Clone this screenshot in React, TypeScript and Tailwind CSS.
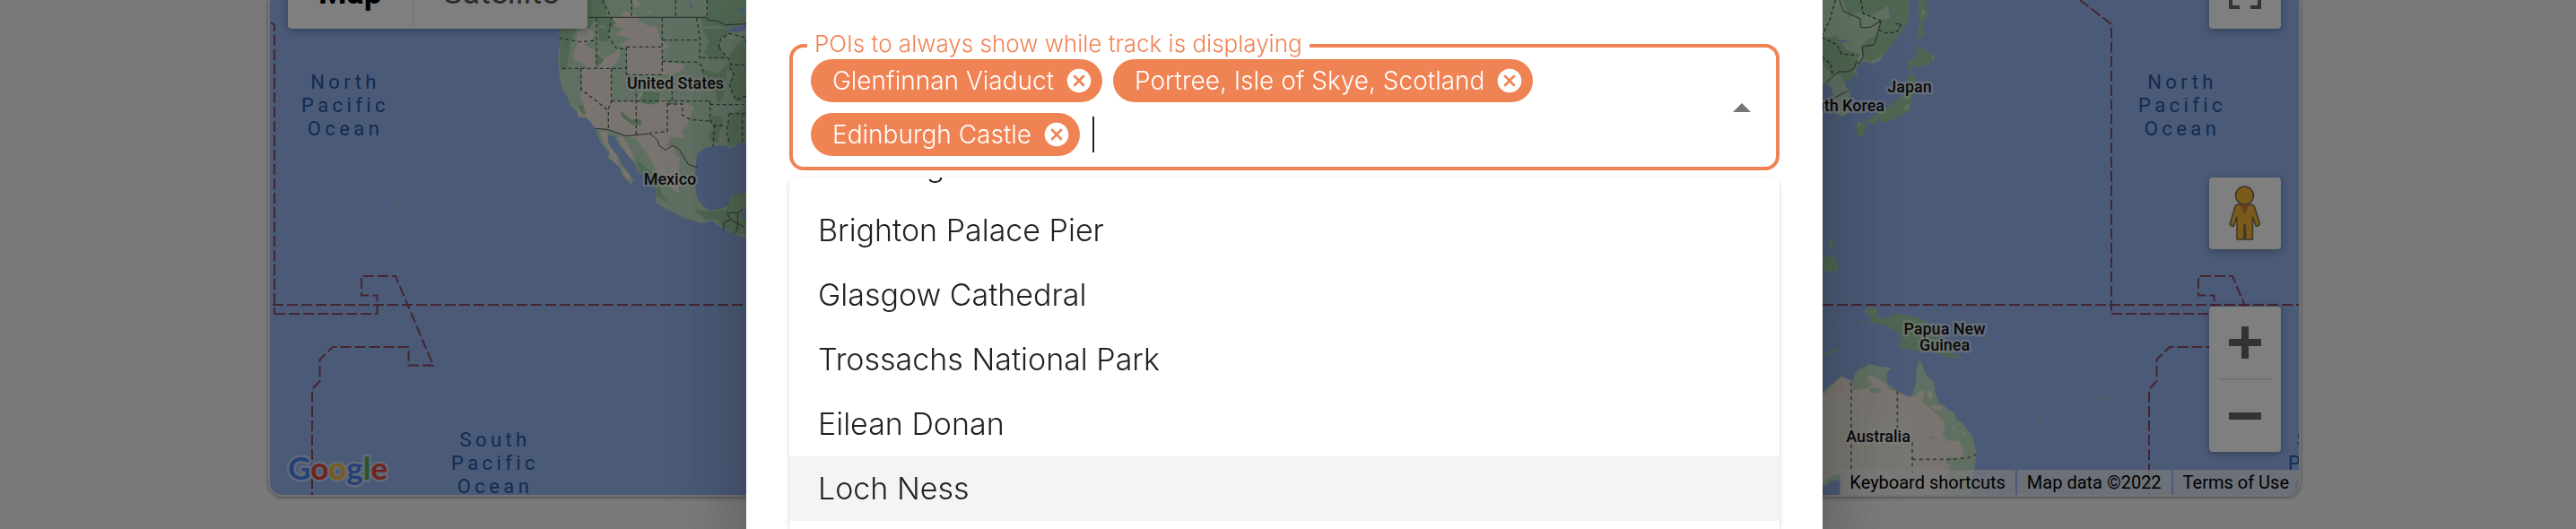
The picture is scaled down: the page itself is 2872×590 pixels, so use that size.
import React from 'react';

const CHIPS = ['Glenfinnan Viaduct', 'Portree, Isle of Skye, Scotland', 'Edinburgh Castle'];
const OPTIONS = [
  'Edinburgh Castle',
  'Brighton Palace Pier',
  'Glasgow Cathedral',
  'Trossachs National Park',
  'Eilean Donan',
  'Loch Ness',
];
const ACTIVE_OPTION = 'Loch Ness';

function OceanLabel({ x, y, first }: { x: number; y: number; first: string }) {
  return (
    <text textAnchor="middle" className="fill-[#28569f] text-[22px] tracking-[0.2em]">
      <tspan x={x} y={y}>{first}</tspan>
      <tspan x={x} y={y + 26}>Pacific</tspan>
      <tspan x={x} y={y + 52}>Ocean</tspan>
    </text>
  );
}

function CountryLabel({ x, y, lines, anchor = 'middle' }: { x: number; y: number; lines: string[]; anchor?: 'middle' | 'end' }) {
  return (
    <text
      textAnchor={anchor}
      stroke="#ffffff"
      strokeOpacity="0.5"
      strokeWidth="5"
      strokeLinejoin="round"
      paintOrder="stroke"
      className="fill-[#161616] text-[18px] font-medium"
    >
      {lines.map((line, i) => (
        <tspan key={line} x={x} y={y + i * 18}>{line}</tspan>
      ))}
    </text>
  );
}

function NorthAmerica() {
  return (
    <g transform="translate(600 0) scale(0.33333)">
      <path
        fill="#bfe0c4"
        d="M71 0V96L75 130 66 195 70 240 73 270 82 300 98 325 108 355 130 375 135 392 160 395 180 412 192 432 205 470 222 495 238 512 230 528 258 540 275 565 280 585 310 617 321 605 300 575 280 550 270 525 245 497 235 475 233 452 258 457 270 485 300 520 325 550 330 572 365 588 395 635 394 680 440 705 490 730 548 748 580 738 610 760 660 785 700 798V642L660 655 645 685 605 700 575 705 552 690 530 660 524 600 530 515 560 495 590 488 625 487 640 497 655 493 665 480 700 477V0Z"
      />
      <g fill="#f3e9df">
        <path d="M143 229H245L240 262 252 300 244 340H328L345 305 360 345 400 350 415 325 430 348 500 345 520 365 505 385 500 420 480 440 490 460 445 460 430 487 455 495 460 520 475 530 468 580 472 645 450 635 420 590 400 575 365 515 345 490 330 465 290 455 232 433 192 430 160 390 135 392 130 350 155 360 140 320 150 300Z" />
        <path d="M250 55 275 60 290 35 335 55 335 70 375 90 395 85 410 135 438 155 415 170 412 205 490 215 485 235 445 250H300L295 165 270 150 310 130 260 115 285 95 250 85Z" />
        <path d="M130 105 165 90 190 110 180 135 150 150 190 165 190 229H165L150 210 120 200 118 170 130 150Z" />
        <path d="M195 165 220 195 275 165 270 200 240 229H200Z" />
        <path d="M205 440 232 440 233 480 262 520 270 550 310 592 300 605 275 560 238 530 240 505 220 480Z" />
        <path d="M262 458 285 458 310 500 325 540 300 520Z" />
        <path d="M310 0H330L345 15 325 25ZM360 35 385 37 370 44Z" />
        <path d="M460 350 520 355 505 400 480 395Z" />
      </g>
      <g fill="#9fcea4">
        <path d="M100 0H225L230 55 260 75 235 110 235 140 205 140 195 60 170 96 125 96 110 140 95 229 80 235 70 225 75 130 71 96Z" />
        <path d="M565 0H700V75L640 95 600 85 550 90 545 60 570 55Z" />
        <path d="M550 95 625 95 640 110 610 130 605 160 635 195 580 200 555 175 570 140Z" />
        <path d="M640 180 700 110V350L660 335 640 285 650 240 635 220Z" />
        <path d="M545 230 600 245 635 215 620 330 600 345 590 290 560 270Z" />
        <path d="M590 385 620 395 612 425 600 480 575 475 570 450 588 430 570 400Z" />
        <path d="M650 380 700 350V478L665 480 640 495 630 465 640 440 632 410Z" />
        <path d="M645 655 700 642V790L650 780 610 755 600 735 560 735 520 700 575 708 630 700Z" />
        <path d="M325 530 360 560 400 590 415 650 440 680 400 660 380 600 340 575Z" />
        <path d="M275 370 310 400 345 400 345 420 310 415 280 390ZM335 340 355 305 405 310 405 340 370 350Z" />
        <path d="M130 350 150 350 160 385 145 380ZM195 175 220 200 200 225Z" />
      </g>
      <g fill="#d7ead7" opacity="0.7">
        <path d="M140 110 165 105 160 135ZM200 90 220 80 222 95ZM635 120 665 115 655 135 640 135ZM585 270 605 262 600 285ZM430 548 450 560 440 575 422 562Z" />
      </g>
      <path fill="#94b4ee" d="M622 112 650 92 700 80V100L660 108 640 105ZM672 28 688 30 685 45 673 42ZM500 0 518 25 512 28ZM683 700 700 695V742L686 738Z" />
      <g fill="none" stroke="#55605a" strokeWidth="4" strokeDasharray="12 9">
        <path d="M312 0V58M460 0V58M565 0V58M415 60V250M415 134H542M530 60 542 134 540 190 548 200M548 193H632M295 157H415M295 157V250M295 250H415M415 205 530 208 548 220 555 262M195 60V135L140 140 70 127M195 140V229M80 229H295M245 229V340L235 365V432M143 229V298L235 370M244 338H575M328 250V455M448 262V348M432 345V440L375 445M432 348H482V385L510 400 575 405M575 338V400L590 425 585 490M215 0 245 60 235 120 260 160 295 165M585 420H628M605 160 610 130 640 112 690 125 700 150M605 160 640 200 645 217H700M640 225 655 250 640 285 660 335 700 320M575 350H700M640 380 630 440 640 480M683 380V480M640 380H700" />
      </g>
      <path
        fill="none"
        stroke="#4c5550"
        strokeWidth="3"
        d="M170 58H565L570 68 600 70 625 83 700 80M190 430 232 433 295 455 375 447 400 470 405 488 426 502 450 487 472 500 502 550 532 560M620 770 622 745 645 735 632 715 650 710 668 712 685 700M668 712V748L690 760M645 735 668 748 665 770 655 782"
      />
    </g>
  );
}

function EastAsia() {
  return (
    <g transform="scale(0.33333) translate(6084 0)">
      <path
        fill="#bfe0c4"
        d="M0 0H302L300 65 270 115 240 155 215 185 200 205 175 212 150 205 122 232 130 250 85 275 90 290 105 310 100 340 108 370 75 392 58 380 48 350 45 300 30 285 0 280Z"
      />
      <g fill="#9fcea4">
        <path d="M80 0H302L300 65 270 115 215 185 180 210 150 200 140 160 165 130 205 110 200 70 240 60 230 20 180 50 130 40 100 60Z" />
        <path d="M12 130 60 120 90 165 130 180 130 225 110 235 130 250 85 275 75 250 40 250 12 210Z" />
        <path d="M332 0H358L368 50 345 70 355 115 330 130 335 60ZM330 150 385 185 388 200 345 225 310 222 298 240 295 205 322 195ZM302 250 322 250 325 290 310 330 305 370 260 395 215 412 200 395 185 420 160 405 200 375 240 350 290 310ZM120 415 155 405 155 440 140 462 128 450ZM415 160 432 152 430 163Z" />
      </g>
      <path fill="#c8dfca" d="M345 30 360 45 345 52ZM375 185 388 190 384 198ZM280 365 300 345 300 370ZM130 410 142 412 130 430ZM175 205 215 185 205 205 180 212Z" />
      <path fill="#94b4ee" d="M60 135 108 135 85 142 65 142ZM235 38 243 30 240 48ZM160 152 168 158 165 168Z" />
      <path
        fill="none"
        stroke="#4c5550"
        strokeWidth="3"
        d="M68 0 82 38 137 62 140 92 170 92 208 70 185 150 145 155 148 190 135 215 125 205 118 230 95 240 65 240 20 280M50 328 95 305"
      />
      <path
        fill="none"
        stroke="#4c5550"
        strokeWidth="4"
        strokeDasharray="12 8"
        d="M55 0 35 70 10 120M140 0 148 45 208 70M200 100 230 112 262 105 275 80 250 80M10 125 60 150 75 180 130 185M10 190 40 215 45 250"
      />
    </g>
  );
}

function Oceania() {
  return (
    <g transform="translate(2028 320) scale(0.33333)">
      <path
        fill="#9fcea4"
        d="M145 80 175 65 195 72 195 95 215 110 255 88 310 98 360 115 400 160 430 215 470 232 465 240 430 235 380 215 320 215 290 205 258 200 275 185 265 155 225 130 200 120 170 122 175 100ZM12 50 40 38 35 48ZM85 48 100 38 97 48ZM58 113 78 118 65 122ZM132 118 155 112 150 120ZM20 225 45 208 75 205 50 218 25 232ZM135 256 148 258 140 264ZM545 160 562 170 560 177Z"
      />
      <path
        fill="#bfe0c4"
        d="M0 360 12 350 75 298 115 315 118 295 130 280 170 258 195 265 243 270 225 290 230 325 262 347 290 365 312 362 325 320 325 280 335 248 345 255 355 290 385 320 388 350 400 385 455 425 460 445 480 455 515 500 527 560 520 610 505 696H75L72 645 40 650 0 680Z"
      />
      <path
        fill="#f3e9df"
        d="M0 380 45 330 75 300 115 320 110 345 160 340 180 325 160 300 175 295 225 325 235 345 262 350 300 368 325 365 340 345 352 352 345 385 360 395 390 422 418 450 420 480 412 495 430 515 470 515 485 555 470 572 430 570 425 590 440 595 430 640 410 696H75L90 625 50 630 12 655 0 660Z"
      />
      <path fill="#f3e9df" d="M360 350 375 345 380 375 368 372ZM375 395 410 400 412 415 385 410ZM445 470 455 465 450 490ZM475 480 490 490 485 498Z" />
      <path fill="#efece2" opacity="0.8" d="M0 400 60 350 130 380 200 440 310 410 330 500 340 620 300 696H90L100 610 0 650Z" />
      <path fill="#bfe0c4" d="M165 340 195 335 210 350 180 358ZM368 505 375 497 382 504 375 510Z" />
      <g fill="none" stroke="#77786f" strokeWidth="5" strokeDasharray="12 11">
        <path d="M108 320V630M262 348V480M312 520V640M312 577H440L500 572 527 560" />
      </g>
    </g>
  );
}

function TreatyLines() {
  return (
    <path d="M306 350H420.500V329.500H403V308H441L483 407.500H455.500V387H371L356.500 401V425L348 434V552" />
  );
}

function WorldMap() {
  return (
    <svg viewBox="301 0 2262 552" className="block w-full font-[Roboto,sans-serif]" aria-label="World map">
      <rect x="301" width="2262" height="552" fill="#94b4ee" />
      <NorthAmerica />
      <EastAsia />
      <Oceania />
      <g fill="#9fcea4">
        <path d="M443 223 448 228H443ZM2038 268H2043L2044 277 2041 280ZM2032 288 2044 285 2050 298 2049 302 2042 305 2032 300ZM2266 458 2276 468 2274 469ZM2341 441 2346 444 2341 446Z" />
      </g>
      <g fill="none" stroke="#8a4a60" strokeWidth="2" strokeDasharray="12 4">
        <path d="M304 340H2563" />
        <path d="M302 25 306 28V350" />
        <path d="M2319 0 2354 27V350" />
        <TreatyLines />
        <g transform="translate(2048 0)">
          <TreatyLines />
        </g>
      </g>
      <OceanLabel x={385} y={99} first="North" />
      <OceanLabel x={552} y={498} first="South" />
      <OceanLabel x={2433} y={99} first="North" />
      <OceanLabel x={2600} y={498} first="South" />
      <CountryLabel x={753} y={99} lines={['United States']} />
      <CountryLabel x={747} y={206} lines={['Mexico']} />
      <CountryLabel x={2129} y={103} lines={['Japan']} />
      <CountryLabel x={2101} y={124} lines={['South Korea']} anchor="end" />
      <CountryLabel x={2168} y={373} lines={['Papua New', 'Guinea']} />
      <CountryLabel x={2094} y={493} lines={['Australia']} />
      <text
        x="321"
        y="535"
        stroke="#c4d3ee"
        strokeWidth="5"
        strokeLinejoin="round"
        paintOrder="stroke"
        className="font-[Lato,sans-serif] text-[35px] font-bold"
      >
        <tspan fill="#4b83ee">G</tspan>
        <tspan fill="#e0493b">o</tspan>
        <tspan fill="#f4b932">o</tspan>
        <tspan fill="#4b83ee">g</tspan>
        <tspan fill="#54a850">l</tspan>
        <tspan fill="#e0493b">e</tspan>
      </text>
    </svg>
  );
}

function MapTypeSwitch() {
  return (
    <div className="absolute -top-12 left-5 flex h-20 overflow-hidden rounded bg-white text-4xl shadow-[0_2px_8px_rgba(0,0,0,0.3)]">
      <button type="button" className="px-[34px] font-bold text-black">Map</button>
      <button type="button" className="border-l-2 border-[#f0f0f0] px-8 text-[#565656]">Satellite</button>
    </div>
  );
}

function MapControls() {
  const box = 'flex w-20 items-center justify-center rounded bg-white shadow-[0_2px_8px_rgba(0,0,0,0.3)]';
  return (
    <div className="absolute -top-12 right-5 flex flex-col">
      <button type="button" aria-label="Toggle fullscreen view" className={`h-20 ${box}`}>
        <svg width="36" height="36" viewBox="0 0 36 36" fill="none" stroke="#666666" strokeWidth="4">
          <path d="M2 12V2H12M24 2H34V12M34 24V34H24M12 34H2V24" />
        </svg>
      </button>
      <button type="button" aria-label="Street View" className={`mt-[166px] h-20 ${box}`}>
        <svg width="36" height="62" viewBox="0 0 36 62" stroke="#7c6c50" strokeWidth="1.500" strokeLinejoin="round">
          <path fill="#f5b638" d="M10 21H25Q28 21 29 25L34.500 43Q33 46 30 45L26.500 35V60H18.500V44H17V60H9V35L5.500 45Q2 46 1 43L6.500 25Q7.500 21 10 21Z" />
          <path fill="#e07b3c" stroke="none" d="M12 21.500H23L17.500 32Z" />
          <circle cx="17.500" cy="11" r="10" fill="#f5b638" />
        </svg>
      </button>
      <div className={`mt-16 flex-col ${box}`}>
        <button type="button" aria-label="Zoom in" className="flex h-20 w-full items-center justify-center">
          <svg width="36" height="36" viewBox="0 0 36 36" fill="#666666">
            <path d="M14 0H22V14H36V22H22V36H14V22H0V14H14Z" />
          </svg>
        </button>
        <span className="h-0.5 w-15 bg-[#e6e6e6]" />
        <button type="button" aria-label="Zoom out" className="flex h-20 w-full items-center justify-center">
          <svg width="36" height="36" viewBox="0 0 36 36" fill="#666666">
            <path d="M0 14H36V22H0Z" />
          </svg>
        </button>
      </div>
    </div>
  );
}

function MapFooter() {
  return (
    <div className="absolute right-0 bottom-0 flex gap-0.5 text-xl leading-7 text-black">
      <button type="button" className="bg-[#f5f5f5]/70 px-[11px]">Keyboard shortcuts</button>
      <span className="bg-[#f5f5f5]/70 px-[11px]">Map data ©2022</span>
      <a href="#terms" className="bg-[#f5f5f5]/70 px-[11px]">Terms of Use</a>
    </div>
  );
}

function Chip({ label }: { label: string }) {
  return (
    <span className="flex h-12 items-center gap-3 rounded-full bg-[#f08354] pr-[10px] pl-6 text-[28px] font-light text-white">
      {label}
      <button type="button" aria-label={`Remove ${label}`}>
        <svg width="32" height="32" viewBox="0 0 24 24" fill="#ffffff">
          <path d="M12 2C6.470 2 2 6.470 2 12s4.470 10 10 10 10-4.470 10-10S17.530 2 12 2zm5 13.590L15.590 17 12 13.410 8.410 17 7 15.590 10.590 12 7 8.410 8.410 7 12 10.590 15.590 7 17 8.410 13.410 12 17 15.590z" />
        </svg>
      </button>
    </span>
  );
}

function PoiPicker() {
  return (
    <fieldset className="rounded-2xl border-4 border-[#f08354] px-4 pt-px pb-3">
      <legend className="px-2 pb-1 text-[26px] leading-6 font-light text-[#f08354]">
        <label htmlFor="poi-input">POIs to always show while track is displaying</label>
      </legend>
      <div className="flex items-center">
        <div className="flex min-w-0 flex-1 flex-wrap items-center gap-3 pl-1">
          {CHIPS.map((chip) => (
            <Chip key={chip} label={chip} />
          ))}
          <div className="flex h-12 min-w-15 flex-1 items-center pl-0.5">
            <span className="h-10 w-0.5 bg-[#222222]" />
            <input
              id="poi-input"
              role="combobox"
              aria-expanded="true"
              aria-controls="poi-options"
              className="h-full min-w-0 flex-1 bg-transparent text-[34px] outline-none"
            />
          </div>
        </div>
        <button type="button" aria-label="Close" className="flex w-11 justify-center">
          <svg width="20" height="10" viewBox="0 0 20 10" fill="#757575">
            <path d="M0 10 10 0 20 10Z" />
          </svg>
        </button>
      </div>
    </fieldset>
  );
}

function PoiOptions() {
  return (
    <div className="mt-2 flex-1 overflow-hidden rounded-t-lg bg-white shadow-[0_2px_2px_rgba(0,0,0,0.14),0_2px_6px_rgba(0,0,0,0.12)]">
      <ul id="poi-options" role="listbox" aria-label="POIs" className="-mt-[49px]">
        {OPTIONS.map((option) => (
          <li
            key={option}
            role="option"
            aria-selected={option === ACTIVE_OPTION}
            className="flex h-18 items-center px-8 pb-0.5 text-[34px] font-light text-[#222222] aria-selected:bg-[#f4f4f4]"
          >
            {option}
          </li>
        ))}
      </ul>
    </div>
  );
}

export default function App() {
  return (
    <div className="relative h-screen overflow-hidden bg-[#f5f5f5]">
      <main className="pr-[307px] pl-[299px] font-[Roboto,sans-serif]">
        <section className="relative overflow-hidden rounded-b-2xl border-2 border-t-0 border-[#e8e6e4] bg-[#94b4ee] shadow-[0_1px_4px_rgba(0,0,0,0.4)]">
          <WorldMap />
          <MapTypeSwitch />
          <MapControls />
          <MapFooter />
        </section>
      </main>
      <div className="fixed inset-0 flex justify-center bg-black/50 pr-2">
        <div
          role="dialog"
          aria-modal="true"
          className="flex h-full w-[1200px] max-w-full flex-col bg-white px-12 pt-[37px] font-[Inter,sans-serif] shadow-[0_22px_30px_-14px_rgba(0,0,0,0.2),0_48px_76px_6px_rgba(0,0,0,0.14),0_18px_92px_16px_rgba(0,0,0,0.12)]"
        >
          <PoiPicker />
          <PoiOptions />
        </div>
      </div>
    </div>
  );
}
